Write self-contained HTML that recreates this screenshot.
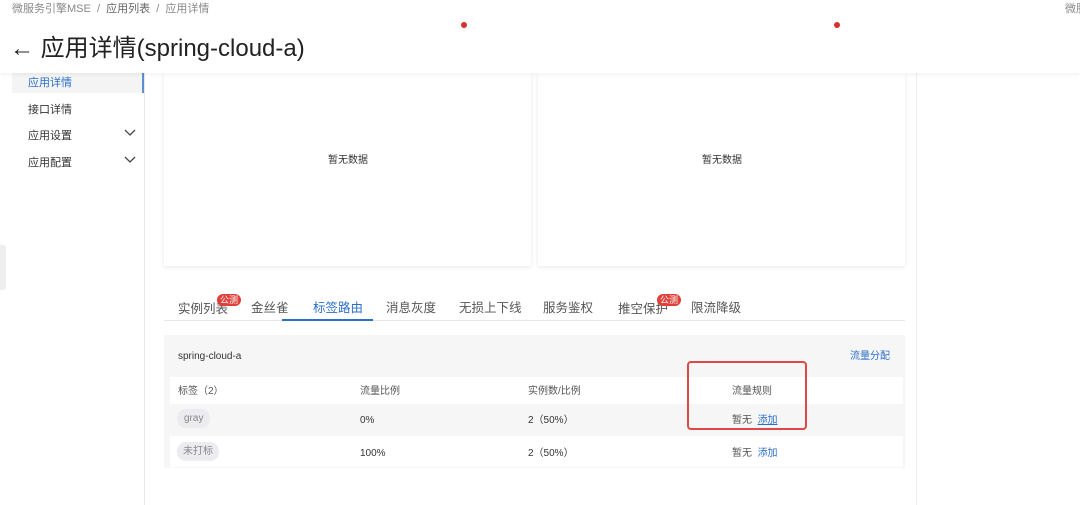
<!DOCTYPE html>
<html><head><meta charset="utf-8"><style>
*{margin:0;padding:0;box-sizing:border-box}
body{width:1080px;height:505px;overflow:hidden;background:#fff;font-family:"Liberation Sans","Noto Sans CJK SC",sans-serif;color:#333;position:relative}
.a{position:absolute;white-space:nowrap;line-height:14px}
.s{font-size:11px;margin-top:2px}
.t{font-size:12.5px;color:#555;line-height:16px;margin-top:1px}
.c{font-size:10px;line-height:12px;margin-top:2px}
.p{height:19px;line-height:19px;padding:0 7px;border-radius:9px;background:#ececf0;color:#888;font-size:10px;margin-top:0}
</style></head><body>
<div class="a" style="left:0;top:0;width:1080px;height:73px;background:#fff;box-shadow:0 2px 4px rgba(0,0,0,.05);z-index:2"></div>
<div class="a s" style="left:12px;top:0px;color:#888;z-index:3">微服务引擎MSE &nbsp;/&nbsp; <span style="color:#666">应用列表</span> &nbsp;/&nbsp; 应用详情</div>
<div class="a s" style="left:1065px;top:0px;color:#888;z-index:3">微服</div>
<div class="a" style="left:461px;top:22px;width:6px;height:6px;border-radius:50%;background:#d9302c;z-index:3"></div>
<div class="a" style="left:834px;top:22px;width:6px;height:6px;border-radius:50%;background:#d9302c;z-index:3"></div>
<div class="a" style="left:10px;top:34px;font-size:24px;line-height:30px;color:#222;z-index:3">← 应用详情(spring-cloud-a)</div>
<div class="a" style="left:144px;top:73px;width:1px;height:432px;background:#e8e8e8"></div>
<div class="a" style="left:916px;top:73px;width:1px;height:432px;background:#eee"></div>
<div class="a" style="left:12px;top:73px;width:132px;height:20px;background:#f4f4f4;border-right:2px solid #5b8fd0"></div>
<div class="a s" style="left:28px;top:74px;color:#2a6fc8">应用详情</div>
<div class="a s" style="left:28px;top:101px">接口详情</div>
<div class="a s" style="left:28px;top:127px">应用设置</div>
<div class="a s" style="left:28px;top:154px">应用配置</div>
<svg class="a" style="left:124px;top:129px" width="12" height="8"><path d="M1 1l5 5 5-5" fill="none" stroke="#444" stroke-width="1.3"/></svg>
<svg class="a" style="left:124px;top:156px" width="12" height="8"><path d="M1 1l5 5 5-5" fill="none" stroke="#444" stroke-width="1.3"/></svg>
<div class="a" style="left:0;top:245px;width:6px;height:45px;background:#eee;border-radius:0 3px 3px 0"></div>
<div class="a" style="left:164px;top:73px;width:367px;height:193px;box-shadow:0 1px 4px rgba(0,0,0,.1)"></div>
<div class="a" style="left:538px;top:73px;width:367px;height:193px;box-shadow:0 1px 4px rgba(0,0,0,.1)"></div>
<div class="a c" style="left:328px;top:153px">暂无数据</div>
<div class="a c" style="left:702px;top:153px">暂无数据</div>
<div class="a" style="left:164px;top:320px;width:741px;height:1px;background:#e6e6e6"></div>
<div class="a" style="left:282px;top:319px;width:91px;height:2px;background:#2a6fc8"></div>
<div class="a t" style="left:178px;top:300px">实例列表</div>
<div class="a" style="left:217px;top:294px;font-size:9px;color:#fff;background:#e0403a;border-radius:6px;padding:0 3px;line-height:12px">公测</div>
<div class="a t" style="left:251px;top:299px">金丝雀</div>
<div class="a t" style="left:313px;top:299px;color:#2a6fc8">标签路由</div>
<div class="a t" style="left:386px;top:299px">消息灰度</div>
<div class="a t" style="left:459px;top:299px">无损上下线</div>
<div class="a t" style="left:543px;top:299px">服务鉴权</div>
<div class="a t" style="left:618px;top:300px">推空保护</div>
<div class="a" style="left:657px;top:294px;font-size:9px;color:#fff;background:#e0403a;border-radius:6px;padding:0 3px;line-height:12px">公测</div>
<div class="a t" style="left:691px;top:299px">限流降级</div>
<div class="a" style="left:164px;top:335px;width:741px;height:133px;background:#f6f6f6"></div>
<div class="a" style="left:170px;top:377px;width:733px;height:27px;background:#fff"></div>
<div class="a" style="left:170px;top:436px;width:733px;height:31px;background:#fff"></div>
<div class="a c" style="left:178px;top:349px">spring-cloud-a</div>
<div class="a c" style="left:850px;top:349px;color:#2a6fc8">流量分配</div>
<div class="a c" style="left:178px;top:384px;color:#555">标签（2）</div>
<div class="a c" style="left:360px;top:384px;color:#555">流量比例</div>
<div class="a c" style="left:528px;top:384px;color:#555">实例数/比例</div>
<div class="a c" style="left:732px;top:384px;color:#555">流量规则</div>
<div class="a p" style="left:177px;top:409px">gray</div>
<div class="a c" style="left:360px;top:413px">0%</div>
<div class="a c" style="left:528px;top:413px">2（50%）</div>
<div class="a c" style="left:732px;top:413px;color:#555">暂无 &nbsp;<span style="color:#2a6fc8;text-decoration:underline">添加</span></div>
<div class="a p" style="left:177px;top:442px;padding:0 6px">未打标</div>
<div class="a c" style="left:360px;top:446px">100%</div>
<div class="a c" style="left:528px;top:446px">2（50%）</div>
<div class="a c" style="left:732px;top:446px;color:#555">暂无 &nbsp;<span style="color:#2a6fc8">添加</span></div>
<div class="a" style="left:687px;top:361px;width:120px;height:69px;border:2px solid #e04848;border-radius:4px"></div>
</body></html>
